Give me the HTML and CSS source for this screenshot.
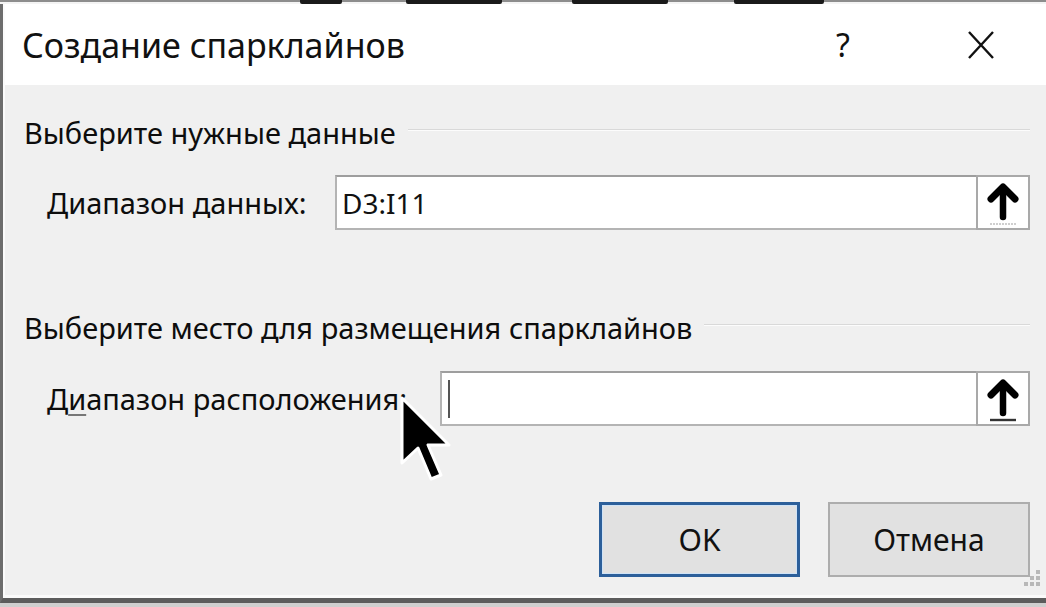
FILE: index.html
```html
<!DOCTYPE html>
<html lang="ru">
<head>
<meta charset="utf-8">
<title>Создание спарклайнов</title>
<link rel="stylesheet" href="styles.css">
</head>
<body>
<div class="strip">
  <span class="blot b1"></span><span class="blot b2"></span><span class="blot b3"></span><span class="blot b4"></span>
</div>
<div class="dialog">
  <div class="frame">
    <div class="titlebar">
      <span class="title">Создание спарклайнов</span>
      <span class="help">?</span>
      <span class="close">
        <svg width="30" height="30" viewBox="0 0 30 30"><path d="M3 2 L27 28 M27 2 L3 28" stroke="#111" stroke-width="2.4" fill="none"/></svg>
      </span>
    </div>
    <div class="content">
      <div class="group-head head-1"><span>Выберите нужные данные</span><div class="rule"></div></div>
      <div class="field-row row-1">
        <span class="label">Диапазон данных:</span>
        <div class="input input-1">
          <span class="value">D3:I11</span>
          <span class="ref-btn">
            <svg width="34" height="46" viewBox="0 0 34 46"><path d="M17 9 V37" stroke="#000" stroke-width="6.5" stroke-linecap="round"/><path d="M5 19 L17 7 L29 19" stroke="#000" stroke-width="7" stroke-linecap="round" stroke-linejoin="round" fill="none"/><path d="M4 44 H30" stroke="#cfcfcf" stroke-width="2" stroke-dasharray="2 1"/></svg>
          </span>
        </div>
      </div>
      <div class="group-head head-2"><span>Выберите место для размещения спарклайнов</span><div class="rule"></div></div>
      <div class="field-row row-2">
        <span class="label">Д<u>и</u>апазон расположения:</span>
        <div class="input input-2">
          <span class="caret"></span>
          <span class="ref-btn">
            <svg width="34" height="46" viewBox="0 0 34 46"><path d="M17 9 V37" stroke="#000" stroke-width="6.5" stroke-linecap="round"/><path d="M5 19 L17 7 L29 19" stroke="#000" stroke-width="7" stroke-linecap="round" stroke-linejoin="round" fill="none"/><path d="M4 44 H30" stroke="#333" stroke-width="2.4"/></svg>
          </span>
        </div>
      </div>
      <div class="actions">
        <span class="btn btn-primary">OK</span>
        <span class="btn">Отмена</span>
      </div>
    </div>
  </div>
  <svg class="grip" width="30" height="26" viewBox="0 0 30 26">
    <rect x="16" y="2" width="4" height="4" fill="#b8b8b8"/>
    <rect x="10" y="8" width="4" height="4" fill="#b8b8b8"/><rect x="16" y="8" width="4" height="4" fill="#b8b8b8"/>
    <rect x="4" y="14" width="4" height="4" fill="#b8b8b8"/><rect x="10" y="14" width="4" height="4" fill="#b8b8b8"/><rect x="16" y="14" width="4" height="4" fill="#b8b8b8"/>
  </svg>
</div>
<svg class="cursor" width="56" height="90" viewBox="0 0 56 90">
  <path d="M3 3 L3 68 L19 53 L32 84 L42 80 L29 50 L50 50 Z" fill="#000" stroke="#fff" stroke-width="3" stroke-linejoin="round"/>
</svg>
</body>
</html>
```
FILE: styles.css
```css
* { box-sizing: border-box; }
html, body { margin: 0; padding: 0; }
body {
  width: 1046px;
  height: 607px;
  overflow: hidden;
  background: #cfcfcf;
  font-family: "Noto Sans", "Open Sans", sans-serif;
  color: #111;
  position: relative;
}
.strip {
  height: 4px;
  background: linear-gradient(#8d8d8d 0 2px, #f4f4f4 2px);
  display: flex;
}
.blot { height: 4px; background: #1a1a1a; border-radius: 0 0 2px 2px; }
.b1 { margin-left: 300px; width: 42px; }
.b2 { margin-left: 64px; width: 96px; }
.b3 { margin-left: 70px; width: 96px; }
.b4 { margin-left: 66px; width: 90px; }
.dialog {
  position: relative;
  height: 599px;
  border-left: 3px solid #6d6d6d;
  border-bottom: 5px solid #5c5c5c;
  background: #f0f0f0;
}
.frame {
  height: 100%;
  border-left: 2px solid #fbfbfb;
  border-bottom: 3px solid #fafafa;
  display: flex;
  flex-direction: column;
}
.titlebar {
  height: 81px;
  background: #fff;
  display: flex;
  align-items: center;
  padding-left: 17px;
}
.title {
  font-size: 34px;
  flex: 1;
  color: #111;
}
.help {
  font-size: 32px;
  width: 30px;
  text-align: center;
  margin-right: 108px;
}
.close {
  display: flex;
  width: 30px;
  margin-right: 50px;
}
.content {
  flex: 1;
  padding: 32px 16px 0 19px;
}
.group-head {
  display: flex;
  align-items: center;
  height: 32px;
  line-height: 32px;
  font-size: 29px;
  color: #0d0d0d;
}
.group-head .rule {
  flex: 1;
  height: 2px;
  border-top: 1px solid #d9d9d9;
  border-bottom: 1px solid #fcfcfc;
  margin-left: 12px;
  margin-top: -6px;
}
.head-2 { margin-top: 82px; }
.field-row {
  display: flex;
  align-items: center;
  justify-content: space-between;
  padding-left: 23px;
  height: 55px;
}
.row-1 { margin-top: 26px; }
.row-2 { margin-top: 27px; }
.label { font-size: 29px; color: #0d0d0d; }
.label u { text-decoration-thickness: 2px; text-underline-offset: 4px; text-decoration-color: #777; }
.input {
  height: 55px;
  background: #fff;
  border: 2px solid #b4b4b4;
  border-top-color: #9e9e9e;
  display: flex;
  align-items: center;
}
.input-1 { width: 695px; }
.input-2 { width: 590px; }
.value {
  flex: 1;
  font-size: 28px;
  padding-left: 5px;
}
.caret {
  width: 2px;
  height: 38px;
  background: #555;
  margin-left: 6px;
  margin-right: auto;
}
.ref-btn {
  width: 54px;
  height: 55px;
  margin: -2px -2px -2px 0;
  border: 2px solid #a9a9a9;
  background: #fff;
  display: flex;
  align-items: center;
  justify-content: center;
}
.actions {
  display: flex;
  justify-content: flex-end;
  gap: 28px;
  margin-top: 76px;
}
.btn {
  width: 202px;
  height: 75px;
  background: #e1e1e1;
  border: 2px solid #adadad;
  display: flex;
  align-items: center;
  justify-content: center;
  font-size: 30px;
  color: #111;
}
.btn-primary {
  width: 201px;
  border: 3px solid #2c5f9a;
  box-shadow: inset 0 0 0 1px #cfe3f7;
}
.grip {
  position: absolute;
  right: -4px;
  bottom: 4px;
}
.cursor {
  position: absolute;
  left: 399px;
  top: 395px;
}
```
